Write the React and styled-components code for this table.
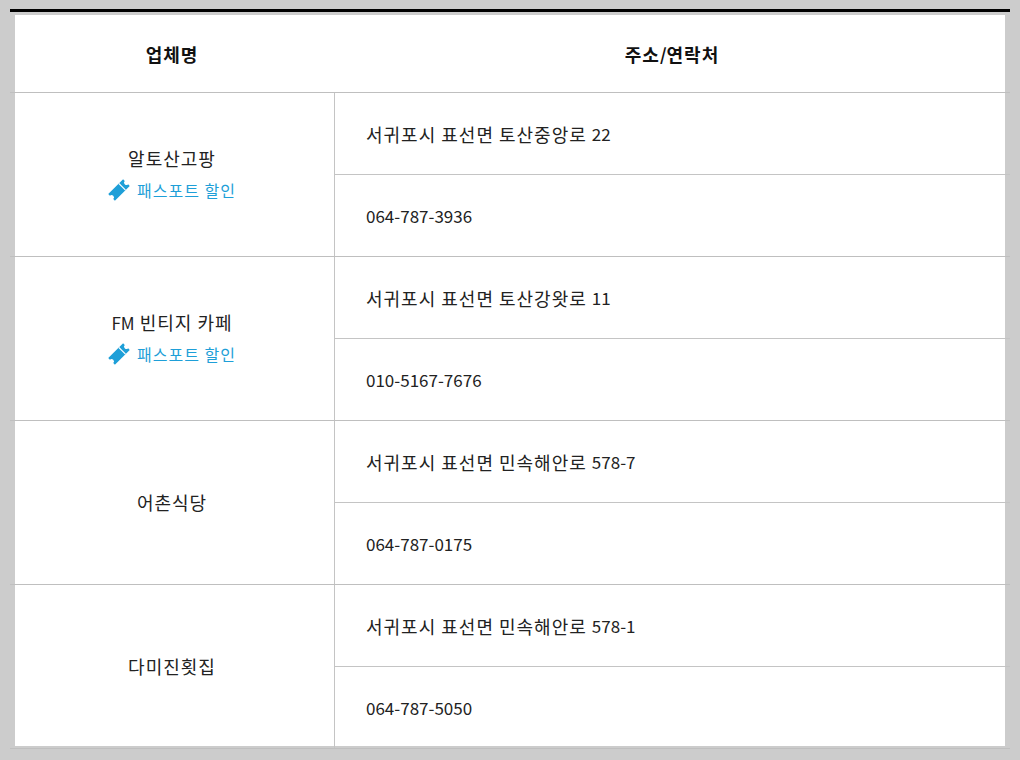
import React from 'react';
import styled, { createGlobalStyle } from 'styled-components';

const GlobalStyle = createGlobalStyle`
    html, body {
        margin: 0;
        padding: 0;
        background: #cccccc;
    }
    body {
        font-family: "Noto Sans CJK KR", "Noto Sans", sans-serif;
        color: #222;
    }
`

const shops = [
    { name: '알토산고팡', passport: true, address: '서귀포시 표선면 토산중앙로 22', phone: '064-787-3936' },
    { name: 'FM 빈티지 카페', passport: true, address: '서귀포시 표선면 토산강왓로 11', phone: '010-5167-7676' },
    { name: '어촌식당', passport: false, address: '서귀포시 표선면 민속해안로 578-7', phone: '064-787-0175' },
    { name: '다미진횟집', passport: false, address: '서귀포시 표선면 민속해안로 578-1', phone: '064-787-5050' },
];

// hangul in the reference font is wider than Noto's, so give the hangul runs a bit more room
const Ko = ({ children, small }) => (
    <>
        {children.split(/([가-힣\s]+)/).filter(Boolean).map((part, i) => (
            /[가-힣]/.test(part)
                ? <Hangul key={i} small={small}>{part}</Hangul>
                : <React.Fragment key={i}>{part}</React.Fragment>
        ))}
    </>
);

const TicketIcon = () => (
    <svg width="22" height="22" viewBox="0 0 22 22">
        <g transform="rotate(-45 11 11)">
            <path
                d="M0.5 6.3 h21 v2.3 a2.4 2.4 0 0 0 0 4.8 v2.3 h-21 v-2.3 a2.4 2.4 0 0 0 0 -4.8 z"
                fill="#1e9fd8"
            />
            <line x1="15.5" y1="6.3" x2="15.5" y2="15.7" stroke="#fff" strokeWidth="1.1" />
        </g>
    </svg>
);

const App = () => {
    return (
        <>
            <GlobalStyle />
            <Table>
                <HeaderRow>
                    <HeadCell><Ko>업체명</Ko></HeadCell>
                    <HeadCell><Ko>주소/연락처</Ko></HeadCell>
                </HeaderRow>
                {shops.map((shop) => (
                    <Row key={shop.name}>
                        <NameCell>
                            <Name><Ko>{shop.name}</Ko></Name>
                            {shop.passport && (
                                <Passport>
                                    <TicketIcon />
                                    <Ko small>패스포트 할인</Ko>
                                </Passport>
                            )}
                        </NameCell>
                        <InfoCell>
                            <InfoLine divider><Ko>{shop.address}</Ko></InfoLine>
                            <InfoLine>{shop.phone}</InfoLine>
                        </InfoCell>
                    </Row>
                ))}
            </Table>
        </>
    )
}

export default App

const Hangul = styled.span`
    font-size: ${props => props.small ? '16px' : '18px'};
    letter-spacing: 1px;
`

const Table = styled.div`
    width: 1000px;
    margin: 9px 0 0 10px;
    border-top: 3px solid #000;
    background: #fff;
    box-shadow:
        inset 0 3px 0 #cccccc,
        inset 0 -3px 0 #cccccc,
        inset 5px 0 0 #cccccc,
        inset -5px 0 0 #cccccc;
`

const HeaderRow = styled.div`
    display: grid;
    grid-template-columns: 324px 1fr;
    height: 80px;
    border-bottom: 1px solid #bfbfbf;
`

const HeadCell = styled.div`
    display: flex;
    align-items: center;
    justify-content: center;
    padding-top: 3px;
    font-size: 17px;
    font-weight: 700;
    color: #111;
`

const Row = styled.div`
    display: grid;
    grid-template-columns: 324px 1fr;
    border-bottom: 1px solid #bfbfbf;
`

const NameCell = styled.div`
    display: flex;
    flex-direction: column;
    align-items: center;
    justify-content: center;
`

const Name = styled.div`
    font-size: 17px;
    line-height: 30px;
    color: #222;
`

const Passport = styled.div`
    display: flex;
    align-items: center;
    gap: 7px;
    font-size: 15px;
    line-height: 32px;
    color: #1e9fd8;
`

const InfoCell = styled.div`
    display: flex;
    flex-direction: column;
    border-left: 1px solid #c4c4c4;
`

const InfoLine = styled.div`
    display: flex;
    align-items: center;
    height: 81px;
    padding-left: 31px;
    font-size: 17px;
    color: #222;
    white-space: pre;
    border-bottom: ${props => props.divider ? '1px solid #c4c4c4' : 'none'};
`
